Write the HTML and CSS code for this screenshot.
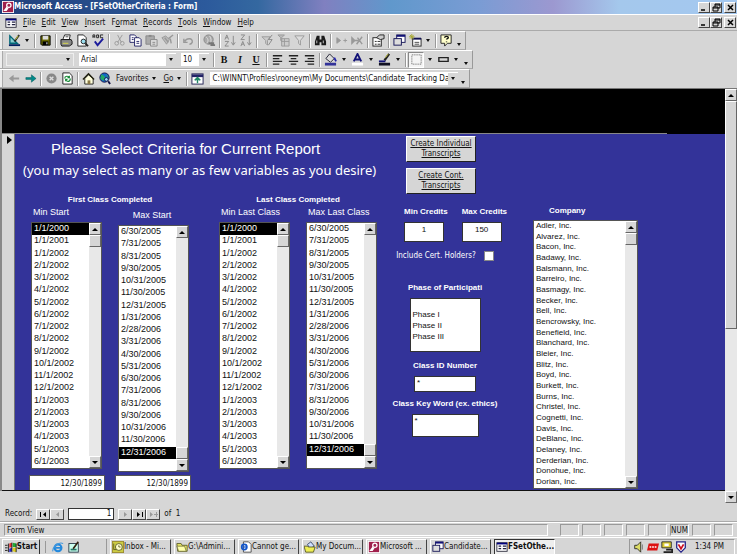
FILE: index.html
```
<!DOCTYPE html>
<html lang="en">
<head>
  <meta charset="UTF-8">
  <meta name="viewport" content="width=device-width, initial-scale=1.0">
  <title>Microsoft Access - [FSetOtherCriteria : Form]</title>
  <link rel="stylesheet" href="styles.css">
</head>
<body>
  <!-- Icons -->
  <svg class="sprite" aria-hidden="true">
    <symbol id="i-key" viewBox="0 0 14 14"><rect width="14" height="14" fill="#fff"/><rect x="1" y="1" width="12" height="12" fill="#a0204c"/><circle cx="8" cy="5" r="2.5" fill="none" stroke="#fff" stroke-width="1.5"/><path d="M6 7l-3 4h2l2-3" fill="none" stroke="#fff" stroke-width="1.5"/></symbol>
    <symbol id="i-form" viewBox="0 0 14 14"><rect x="1" y="2" width="12" height="10" fill="#fff" stroke="#223"/><path d="M1 3h12" stroke="#000080" stroke-width="2"/><path d="M3 6h3M3 9h3M8 6h4M8 9h4" stroke="#224" stroke-width="1.5"/></symbol>
    <symbol id="i-design" viewBox="0 0 14 14"><path d="M2 2v8h8z" fill="#8cc" stroke="#067" stroke-width="1.5"/><path d="M1 12h12" stroke="#002060" stroke-width="2"/><path d="M12 1L7 8" stroke="#222" stroke-width="2"/><path d="M11 2L8 6" stroke="#dd4"/></symbol>
    <symbol id="i-save" viewBox="0 0 14 14"><path d="M2 2h10v10H3l-1-1z" fill="#660" stroke="#000"/><path d="M4 2h6v4H4z" fill="#ddd"/><path d="M4 8h6v4H4z" fill="#000"/><path d="M8 9h1v2H8z" fill="#fff"/></symbol>
    <symbol id="i-print" viewBox="0 0 14 14"><path d="M5 1h6l-1 5H3z" fill="#fff" stroke="#222"/><path d="M1 6h11l1 2v3l-3 2H2l-1-2z" fill="#888" stroke="#111"/><path d="M3 10h6" stroke="#dd4"/><path d="M6 3h3" stroke="#444"/></symbol>
    <symbol id="i-preview" viewBox="0 0 14 14"><path d="M2 1h6l3 3v9H2z" fill="#fff" stroke="#222"/><circle cx="8" cy="8" r="2.5" fill="#9de" stroke="#222"/><path d="M10 10l3 3" stroke="#222" stroke-width="2"/></symbol>
    <symbol id="i-spell" viewBox="0 0 14 14"><path d="M1 4V1h2v3M1 3h2M5 1v3h2V1zM12 1H9v3h3" fill="none" stroke="#222"/><path d="M3 8l3 4 6-7" fill="none" stroke="#1c1c9c" stroke-width="2"/></symbol>
    <symbol id="i-cut" viewBox="0 0 14 14"><path d="M5 1l4 8M10 1L5 9" stroke="#999" fill="none"/><circle cx="4" cy="10" r="2" fill="none" stroke="#999"/><circle cx="10" cy="10" r="2" fill="none" stroke="#999"/></symbol>
    <symbol id="i-copy" viewBox="0 0 14 14"><path d="M1 1h5l2 2v6H1z" fill="#fff" stroke="#226"/><path d="M6 4h5l2 2v7H6z" fill="#fff" stroke="#226"/><path d="M3 4h2M3 6h2M8 8h3M8 10h3" stroke="#226"/></symbol>
    <symbol id="i-paste" viewBox="0 0 14 14"><path d="M1 2h9v9H1z" fill="#aaa" stroke="#888"/><path d="M4 1h3v2H4z" fill="#888"/><path d="M6 6h7v7H6z" fill="#ddd" stroke="#888"/><path d="M8 9h3M8 11h3" stroke="#888"/></symbol>
    <symbol id="i-painter" viewBox="0 0 14 14"><path d="M1 4l4-2 4 4-3 5z" fill="#bbb" stroke="#999"/><path d="M8 5l5-4M4 4l4 5M10 5l1 5" stroke="#999" stroke-width="1.5"/></symbol>
    <symbol id="i-undo" viewBox="0 0 14 14"><path d="M2 5v4h4M3 8c2-4 9-4 8 1-1 2-2 2-3 2" fill="none" stroke="#999" stroke-width="1.5"/></symbol>
    <symbol id="i-globe" viewBox="0 0 14 14"><circle cx="6" cy="6" r="5" fill="#aaa" stroke="#888"/><path d="M3 3c3 2 3 5 1 7M7 2c2 3 2 5 1 8" stroke="#ddd" fill="none"/><path d="M6 10h6M8 12h5" stroke="#777" stroke-width="2"/></symbol>
    <symbol id="i-sort" viewBox="0 0 14 14"><path d="M1 6l2-5 2 5M2 4h2M1 8h4l-4 5h4" stroke="#888" fill="none"/><path d="M10 2v9M8 9l2 3 2-3" stroke="#888" fill="none"/></symbol>
    <symbol id="i-sortdesc" viewBox="0 0 14 14"><path d="M1 13l2-5 2 5M2 11h2M1 1h4L1 6h4" stroke="#888" fill="none"/><path d="M10 2v9M8 9l2 3 2-3" stroke="#888" fill="none"/></symbol>
    <symbol id="i-filtersel" viewBox="0 0 14 14"><path d="M1 3h9L7 7v5L5 10V7z" fill="#ccc" stroke="#999"/><path d="M12 1L8 6h4l-4 6" fill="none" stroke="#888"/></symbol>
    <symbol id="i-filterform" viewBox="0 0 14 14"><path d="M5 5h8v8H5zM5 8h8M8 5v8" fill="#ccc" stroke="#999"/><path d="M1 1h7L5 4v4L4 7V4z" fill="#bbb" stroke="#999"/></symbol>
    <symbol id="i-filter" viewBox="0 0 14 14"><path d="M2 2h10L8 7v5L6 10V7z" fill="#ddd" stroke="#999"/></symbol>
    <symbol id="i-find" viewBox="0 0 14 14"><path d="M3 2h3v4h2V2h3l2 6v4H8V9H6v3H1V8z" fill="#1a1a1a"/><path d="M3 7v3M10 7v3" stroke="#ccc"/></symbol>
    <symbol id="i-newrec" viewBox="0 0 14 14"><path d="M2 4l4 3-4 3zM9 7h4M11 5v4" fill="#999" stroke="#999"/></symbol>
    <symbol id="i-delrec" viewBox="0 0 14 14"><path d="M1 4l3 3-3 3zM4 7h4M6 11l6-8M7 4l5 7" fill="#999" stroke="#999" stroke-width="1.5"/></symbol>
    <symbol id="i-props" viewBox="0 0 14 14"><rect x="1" y="4" width="9" height="9" fill="#fff" stroke="#222"/><path d="M3 8h2M3 11h2M6 8h3M6 11h3" stroke="#222"/><path d="M5 4l3-3h5v4l-4 1z" fill="#ccc" stroke="#222"/></symbol>
    <symbol id="i-windows" viewBox="0 0 14 14"><rect x="4" y="1" width="9" height="8" fill="#fff" stroke="#115"/><path d="M4 2h9" stroke="#117" stroke-width="2"/><rect x="1" y="5" width="8" height="7" fill="#ddd" stroke="#115"/></symbol>
    <symbol id="i-newobj" viewBox="0 0 14 14"><rect x="4" y="5" width="9" height="8" fill="#fff" stroke="#222"/><path d="M4 5h9" stroke="#115" stroke-width="2"/><path d="M6 9h5M6 11h5" stroke="#444"/><path d="M3 0v6M0 3h6M1 1l4 4M5 1L1 5" stroke="#aa3"/></symbol>
    <symbol id="i-help" viewBox="0 0 14 14"><path d="M1 1h11v9H8l-3 3v-3H1z" fill="#ffc" stroke="#222"/><path d="M5 4c0-2 4-2 4 0 0 1-2 1-2 2M7 8v1" fill="none" stroke="#111" stroke-width="1.5"/></symbol>
    <symbol id="i-left" viewBox="0 0 14 14"><path d="M2 3h10M2 6h7M2 9h10M2 12h7" stroke="#222" stroke-width="1.5"/></symbol>
    <symbol id="i-center" viewBox="0 0 14 14"><path d="M2 3h10M4 6h6M2 9h10M4 12h6" stroke="#222" stroke-width="1.5"/></symbol>
    <symbol id="i-right" viewBox="0 0 14 14"><path d="M2 3h10M5 6h7M2 9h10M5 12h7" stroke="#222" stroke-width="1.5"/></symbol>
    <symbol id="i-fill" viewBox="0 0 14 14"><path d="M6 1l5 5-4 4-5-4z" fill="#ddd" stroke="#223"/><path d="M11 5l2 4" stroke="#22a" stroke-width="2"/><path d="M1 12h12" stroke="#339" stroke-width="3"/></symbol>
    <symbol id="i-fontcolor" viewBox="0 0 14 14"><path d="M3 9l4-8 4 8M4 7h6" fill="none" stroke="#117" stroke-width="2"/><path d="M1 12h12" stroke="#fff" stroke-width="3"/></symbol>
    <symbol id="i-linecolor" viewBox="0 0 14 14"><path d="M12 1L7 8" stroke="#222" stroke-width="2.5"/><path d="M11 1L8 5" stroke="#cc4"/><path d="M1 9h7" stroke="#117" stroke-width="2"/><path d="M1 12h12" stroke="#112" stroke-width="3"/></symbol>
    <symbol id="i-border" viewBox="0 0 14 14"><path d="M2 2h10v10H2z" fill="none" stroke="#555" stroke-dasharray="1 1"/></symbol>
    <symbol id="i-effect" viewBox="0 0 14 14"><path d="M2 5h10v4H2z" fill="none" stroke="#222" stroke-width="1.5"/></symbol>
    <symbol id="i-back" viewBox="0 0 14 14"><path d="M1 7l5-4v3h6v2H6v3z" fill="#999"/></symbol>
    <symbol id="i-forward" viewBox="0 0 14 14"><path d="M13 7L8 3v3H2v2h6v3z" fill="#088" stroke="#055" stroke-width=".5"/></symbol>
    <symbol id="i-stop" viewBox="0 0 14 14"><circle cx="7" cy="7" r="5.5" fill="#888"/><path d="M5 5l4 4M9 5l-4 4" stroke="#ddd" stroke-width="1.5"/></symbol>
    <symbol id="i-refresh" viewBox="0 0 14 14"><path d="M2 1h7l3 3v9H2z" fill="#fff" stroke="#222"/><path d="M4 7c0-3 4-3 5-1M10 7c0 4-4 4-5 1M9 4v2H7M5 10V8h2" fill="none" stroke="#183" stroke-width="1.2"/></symbol>
    <symbol id="i-home" viewBox="0 0 14 14"><path d="M3 7v6h9V7L7 3z" fill="#ffd" stroke="#222"/><path d="M1 8l6-6 6 6" fill="none" stroke="#221" stroke-width="1.5"/><path d="M6 9h3v4H6z" fill="#874"/></symbol>
    <symbol id="i-web" viewBox="0 0 14 14"><circle cx="7" cy="6" r="5" fill="#16c" stroke="#114"/><path d="M4 3l3 2-1 4-3-2zM9 3l2 3" fill="#2a6" stroke="#2a6"/><circle cx="9" cy="8" r="2" fill="#9df" stroke="#114"/><path d="M11 10l2 3" stroke="#114" stroke-width="2"/></symbol>
    <symbol id="i-hidebars" viewBox="0 0 14 14"><rect x="1" y="2" width="12" height="11" fill="#fff" stroke="#225"/><path d="M1 4h12" stroke="#226" stroke-width="3"/><path d="M7 12V8M4 9l3-3 3 3" fill="#286" stroke="#286" stroke-width="1.5"/></symbol>
    <symbol id="i-flag" viewBox="0 0 14 14"><path d="M5 3l3-1v5l-3 1z" fill="#e33"/><path d="M9 2l4 1v4L9 7z" fill="#2a3"/><path d="M5 9l3-1v4l-3 1z" fill="#22c"/><path d="M9 8h4v5l-4-1z" fill="#dc2"/><path d="M4 3v10M8 2v11M13 3v10M0 5h3M0 8h3M0 11h3" stroke="#111"/></symbol>
    <symbol id="i-ie" viewBox="0 0 14 14"><circle cx="7" cy="8" r="4" fill="none" stroke="#28d" stroke-width="2.5"/><path d="M4 8h7" stroke="#28d" stroke-width="2"/><path d="M1 12C0 8 8 0 13 3" fill="none" stroke="#49d" stroke-width="1.2"/></symbol>
    <symbol id="i-iepage" viewBox="0 0 14 14"><path d="M4 1h6l3 3v9H4z" fill="#fff" stroke="#444"/><circle cx="5" cy="7" r="3" fill="none" stroke="#15c" stroke-width="2"/><path d="M3 7h5" stroke="#15c" stroke-width="1.5"/></symbol>
    <symbol id="i-desktop" viewBox="0 0 14 14"><rect x="1" y="3" width="11" height="10" fill="#cfe" stroke="#234"/><path d="M3 10h7" stroke="#276" stroke-width="2"/><path d="M12 1L6 9" stroke="#321" stroke-width="2"/></symbol>
    <symbol id="i-mail" viewBox="0 0 14 14"><rect width="14" height="14" fill="#983"/><rect x="1" y="1" width="12" height="12" fill="#cc4"/><circle cx="8" cy="7" r="4" fill="#ffc" stroke="#552"/><path d="M8 5v2h2" fill="none" stroke="#552"/><path d="M2 3v7h3" fill="none" stroke="#552"/></symbol>
    <symbol id="i-folder" viewBox="0 0 14 14"><path d="M1 3h5l1 2h6v7H2z" fill="#ee6" stroke="#552"/><path d="M1 6h9l2 6H3z" fill="#ffa" stroke="#774"/></symbol>
    <symbol id="i-docs" viewBox="0 0 14 14"><path d="M4 4l4-3 4 5-5 3z" fill="#cdf" stroke="#346"/><path d="M0 6h4l1 1h8l-2 6H2z" fill="#ee5" stroke="#552"/></symbol>
    <symbol id="i-speaker" viewBox="0 0 14 14"><path d="M2 5h3l4-4v12L5 9H2z" fill="#dd6" stroke="#222"/><path d="M11 4v6" stroke="#777"/></symbol>
    <symbol id="i-red" viewBox="0 0 14 14"><path d="M2 3h12l-2 8H0z" fill="#d11"/><path d="M3 7h8" stroke="#fff" stroke-width="1.5" stroke-dasharray="2 1"/></symbol>
    <symbol id="i-monitor" viewBox="0 0 14 14"><path d="M1 1h11v7H1z" fill="#dc3" stroke="#222"/><path d="M4 3h5v3H4z" fill="#fff"/><path d="M6 10h7v3H3" fill="none" stroke="#222" stroke-width="2"/></symbol>
    <symbol id="i-shield" viewBox="0 0 14 14"><path d="M2 1h10v7l-5 5-5-5z" fill="#fff" stroke="#228" stroke-width="1.5"/><path d="M4 4l3 5 3-5" fill="none" stroke="#c12" stroke-width="2"/></symbol>
    <symbol id="w-min" viewBox="0 0 9 9"><path d="M1 7h4" stroke="#000" stroke-width="1.5"/></symbol>
    <symbol id="w-restore" viewBox="0 0 9 9"><path d="M3 4V1h5v4H6M3 2h5M1 4h5v4H1zM1 5h5" fill="none" stroke="#000"/></symbol>
    <symbol id="w-close" viewBox="0 0 9 9"><path d="M2 2l5 5M7 2L2 7" stroke="#000" stroke-width="1.5"/></symbol>
    <symbol id="r-prev" viewBox="0 0 9 9"><path d="M6 2v5L3 4.500z"/></symbol>
    <symbol id="r-first" viewBox="0 0 9 9"><path d="M1 2h1v5H1zM7 2v5L4 4.500z"/></symbol>
    <symbol id="r-next" viewBox="0 0 9 9"><path d="M3 2v5l3-2.500z"/></symbol>
    <symbol id="r-last" viewBox="0 0 9 9"><path d="M7 2h1v5H7zM2 2v5l3-2.500z"/></symbol>
    <symbol id="r-new" viewBox="0 0 9 9"><path d="M1 2v5l3-2.500zM5 4h4v1H5zM7 2h1v5H7z"/></symbol>
  </svg>

  <header class="titlebar">
    <svg class="icon"><use href="#i-key"/></svg>
    <h1>Microsoft Access - [FSetOtherCriteria : Form]</h1>
    <div class="window-buttons">
      <button aria-label="Minimize"><svg><use href="#w-min"/></svg></button>
      <button aria-label="Restore"><svg><use href="#w-restore"/></svg></button>
      <button class="close" aria-label="Close"><svg><use href="#w-close"/></svg></button>
    </div>
  </header>

  <nav class="menubar">
    <svg class="icon"><use href="#i-form"/></svg>
    <button><u>F</u>ile</button>
    <button><u>E</u>dit</button>
    <button><u>V</u>iew</button>
    <button><u>I</u>nsert</button>
    <button>F<u>o</u>rmat</button>
    <button><u>R</u>ecords</button>
    <button><u>T</u>ools</button>
    <button><u>W</u>indow</button>
    <button><u>H</u>elp</button>
    <div class="window-buttons">
      <button aria-label="Minimize form"><svg><use href="#w-min"/></svg></button>
      <button aria-label="Restore form"><svg><use href="#w-restore"/></svg></button>
      <button class="close" aria-label="Close form"><svg><use href="#w-close"/></svg></button>
    </div>
  </nav>

  <div class="toolbars">
    <div class="toolbar">
      <button aria-label="View"><svg><use href="#i-design"/></svg></button>
      <button class="drop" aria-label="View list"></button>
      <i class="sep"></i>
      <button aria-label="Save"><svg><use href="#i-save"/></svg></button>
      <i class="sep"></i>
      <button aria-label="Print"><svg><use href="#i-print"/></svg></button>
      <button aria-label="Print Preview"><svg><use href="#i-preview"/></svg></button>
      <button aria-label="Spelling"><svg><use href="#i-spell"/></svg></button>
      <i class="sep"></i>
      <button aria-label="Cut"><svg><use href="#i-cut"/></svg></button>
      <button aria-label="Copy"><svg><use href="#i-copy"/></svg></button>
      <button aria-label="Paste"><svg><use href="#i-paste"/></svg></button>
      <button aria-label="Format Painter"><svg><use href="#i-painter"/></svg></button>
      <i class="sep"></i>
      <button aria-label="Undo"><svg><use href="#i-undo"/></svg></button>
      <i class="sep"></i>
      <button aria-label="Insert Hyperlink"><svg><use href="#i-globe"/></svg></button>
      <i class="sep"></i>
      <button aria-label="Sort Ascending"><svg><use href="#i-sort"/></svg></button>
      <button aria-label="Sort Descending"><svg><use href="#i-sortdesc"/></svg></button>
      <i class="sep"></i>
      <button aria-label="Filter By Selection"><svg><use href="#i-filtersel"/></svg></button>
      <button aria-label="Filter By Form"><svg><use href="#i-filterform"/></svg></button>
      <button aria-label="Apply Filter"><svg><use href="#i-filter"/></svg></button>
      <i class="sep"></i>
      <button aria-label="Find"><svg><use href="#i-find"/></svg></button>
      <i class="sep"></i>
      <button aria-label="New Record"><svg><use href="#i-newrec"/></svg></button>
      <button aria-label="Delete Record"><svg><use href="#i-delrec"/></svg></button>
      <i class="sep"></i>
      <button aria-label="Properties"><svg><use href="#i-props"/></svg></button>
      <i class="sep"></i>
      <button aria-label="Database Window"><svg><use href="#i-windows"/></svg></button>
      <button aria-label="New Object"><svg><use href="#i-newobj"/></svg></button>
      <button class="drop" aria-label="New Object list"></button>
      <i class="sep"></i>
      <button aria-label="Help"><svg><use href="#i-help"/></svg></button>
      <button class="drop low" aria-label="More buttons"></button>
    </div>

    <div class="toolbar">
      <div class="combo combo-object"><input type="text" aria-label="Object" disabled><button class="drop" aria-label="Object list"></button></div>
      <div class="combo combo-font"><input type="text" aria-label="Font" value="Arial"><button class="drop" aria-label="Font list"></button></div>
      <div class="combo combo-size"><input type="text" aria-label="Font Size" value="10"><button class="drop" aria-label="Size list"></button></div>
      <i class="sep"></i>
      <button class="glyph">B</button>
      <button class="glyph italic">I</button>
      <button class="glyph underline">U</button>
      <i class="sep"></i>
      <button aria-label="Align Left"><svg><use href="#i-left"/></svg></button>
      <button aria-label="Center"><svg><use href="#i-center"/></svg></button>
      <button aria-label="Align Right"><svg><use href="#i-right"/></svg></button>
      <i class="sep"></i>
      <button aria-label="Fill Color"><svg><use href="#i-fill"/></svg></button>
      <button class="drop wide" aria-label="Fill Color list"></button>
      <button aria-label="Font Color"><svg><use href="#i-fontcolor"/></svg></button>
      <button class="drop wide" aria-label="Font Color list"></button>
      <button aria-label="Line Color"><svg><use href="#i-linecolor"/></svg></button>
      <button class="drop wide" aria-label="Line Color list"></button>
      <i class="sep"></i>
      <button class="pressed" aria-label="Line Width"><svg><use href="#i-border"/></svg></button>
      <button class="drop wide" aria-label="Line Width list"></button>
      <button aria-label="Special Effect"><svg><use href="#i-effect"/></svg></button>
      <button class="drop" aria-label="Special Effect list"></button>
      <button class="drop low" aria-label="More buttons"></button>
    </div>

    <div class="toolbar">
      <button aria-label="Back"><svg><use href="#i-back"/></svg></button>
      <button aria-label="Forward"><svg><use href="#i-forward"/></svg></button>
      <i class="sep"></i>
      <button aria-label="Stop"><svg><use href="#i-stop"/></svg></button>
      <button aria-label="Refresh"><svg><use href="#i-refresh"/></svg></button>
      <i class="sep"></i>
      <button aria-label="Start Page"><svg><use href="#i-home"/></svg></button>
      <button aria-label="Search the Web"><svg><use href="#i-web"/></svg></button>
      <button class="text">Favorites</button>
      <button class="drop wide" aria-label="Favorites list"></button>
      <button class="text"><u>G</u>o</button>
      <button class="drop wide" aria-label="Go list"></button>
      <i class="sep"></i>
      <button aria-label="Show Only Web Toolbar"><svg><use href="#i-hidebars"/></svg></button>
      <div class="combo combo-address"><input type="text" aria-label="Address" value="C:\WINNT\Profiles\rooneym\My Documents\Candidate Tracking Da"><button class="drop" aria-label="Address list"></button></div>
      <button class="drop low" aria-label="More buttons"></button>
    </div>
  </div>

  <div class="workspace">
    <main class="form">
      <div class="form-header"></div>
      <div class="form-detail">
        <button class="record-selector" aria-label="Select record"></button>
        <div class="criteria">
          <section class="dates">
            <div class="heading">
              <h2>Please Select Criteria for Current Report</h2>
              <p>(you may select as many or as few variables as you desire)</p>
            </div>
            <div class="date-groups">
              <div class="date-group">
                <h3>First Class Completed</h3>
                <div class="columns">
                  <div class="column">
                    <label for="min-start">Min Start</label>
                    <div class="listbox">
                      <select id="min-start" size="20"></select>
                      <div class="scroll"><button class="up" aria-label="Up"></button><span class="thumb"></span><button class="down" aria-label="Down"></button></div>
                    </div>
                  </div>
                  <div class="column column-max">
                    <label for="max-start">Max Start</label>
                    <div class="listbox">
                      <select id="max-start" size="20"></select>
                      <div class="scroll at-end"><button class="up" aria-label="Up"></button><span class="thumb"></span><button class="down" aria-label="Down"></button></div>
                    </div>
                  </div>
                </div>
                <div class="chosen">
                  <input type="text" aria-label="Chosen min start" value="12/30/1899">
                  <input type="text" aria-label="Chosen max start" value="12/30/1899">
                </div>
              </div>
              <div class="date-group">
                <h3>Last Class Completed</h3>
                <div class="columns">
                  <div class="column">
                    <label for="min-last">Min Last Class</label>
                    <div class="listbox">
                      <select id="min-last" size="20"></select>
                      <div class="scroll"><button class="up" aria-label="Up"></button><span class="thumb"></span><button class="down" aria-label="Down"></button></div>
                    </div>
                  </div>
                  <div class="column">
                    <label for="max-last">Max Last Class</label>
                    <div class="listbox">
                      <select id="max-last" size="20"></select>
                      <div class="scroll at-end"><button class="up" aria-label="Up"></button><span class="thumb"></span><button class="down" aria-label="Down"></button></div>
                    </div>
                  </div>
                </div>
              </div>
            </div>
          </section>

          <section class="options">
            <div class="commands">
              <button>Create Individual<br>Transcripts</button>
              <button>Create Cont.<br>Transcripts</button>
            </div>
            <div class="credits">
              <div class="field">
                <label for="min-credits">Min Credits</label>
                <input id="min-credits" type="text" value="1">
              </div>
              <div class="field">
                <label for="max-credits">Max Credits</label>
                <input id="max-credits" type="text" value="150">
              </div>
            </div>
            <div class="holders">
              <label for="holders">Include Cert. Holders?</label>
              <input id="holders" type="checkbox">
            </div>
            <div class="field phase">
              <label for="phase">Phase of Participati</label>
              <select id="phase" size="4">
                <option></option>
                <option>Phase I</option>
                <option>Phase II</option>
                <option>Phase III</option>
              </select>
            </div>
            <div class="field">
              <label for="class-id">Class ID Number</label>
              <input id="class-id" class="class-id" type="text" value="*">
            </div>
            <div class="field">
              <label for="key-word">Class Key Word (ex. ethics)</label>
              <textarea id="key-word" class="key-word">*</textarea>
            </div>
          </section>

          <section class="company">
            <label for="company">Company</label>
            <div class="listbox">
              <select id="company" size="25"></select>
              <div class="scroll"><button class="up" aria-label="Up"></button><span class="thumb"></span><button class="down" aria-label="Down"></button></div>
            </div>
          </section>
        </div>
      </div>
    </main>
    <div class="scroll form-scroll"><button class="up" aria-label="Scroll up"></button><span class="thumb"></span><button class="down" aria-label="Scroll down"></button></div>
  </div>

  <div class="recordbar">
    <label for="record">Record:</label>
    <div class="nav-buttons">
      <button aria-label="First"><svg><use href="#r-first"/></svg></button>
      <button aria-label="Previous" disabled><svg><use href="#r-prev"/></svg></button>
    </div>
    <input id="record" type="text" value="1">
    <div class="nav-buttons">
      <button aria-label="Next" disabled><svg><use href="#r-next"/></svg></button>
      <button aria-label="Last"><svg><use href="#r-last"/></svg></button>
      <button aria-label="New" disabled><svg><use href="#r-new"/></svg></button>
    </div>
    <span>of&nbsp; 1</span>
  </div>

  <div class="statusbar">
    <span class="message">Form View</span>
    <span></span>
    <span></span>
    <span></span>
    <span></span>
    <span></span>
    <span>NUM</span>
    <span></span>
    <span></span>
  </div>

  <footer class="taskbar">
    <button class="start"><svg class="icon"><use href="#i-flag"/></svg>Start</button>
    <div class="quick">
      <button aria-label="Internet Explorer"><svg class="icon"><use href="#i-ie"/></svg></button>
      <button aria-label="Show Desktop"><svg class="icon"><use href="#i-desktop"/></svg></button>
    </div>
    <div class="tasks">
      <button><svg class="icon"><use href="#i-mail"/></svg>Inbox - Mi...</button>
      <button><svg class="icon"><use href="#i-folder"/></svg>G:\Admini...</button>
      <button><svg class="icon"><use href="#i-iepage"/></svg>Cannot ge...</button>
      <button><svg class="icon"><use href="#i-docs"/></svg>My Docum...</button>
      <button><svg class="icon"><use href="#i-key"/></svg>Microsoft ...</button>
      <button><svg class="icon"><use href="#i-windows"/></svg>Candidate...</button>
      <button class="active"><svg class="icon"><use href="#i-form"/></svg>FSetOthe...</button>
    </div>
    <div class="tray">
      <svg class="icon"><use href="#i-speaker"/></svg>
      <svg class="icon"><use href="#i-red"/></svg>
      <svg class="icon"><use href="#i-monitor"/></svg>
      <svg class="icon"><use href="#i-shield"/></svg>
      <time>1:34 PM</time>
    </div>
  </footer>

  <script>
    const minDates = ["1/1/2000", "1/1/2001"];
    for (let m = 1; m <= 12; m++) minDates.push(`${m}/1/2002`);
    for (let m = 1; m <= 6; m++) minDates.push(`${m}/1/2003`);

    // Month ends from June 2005 to December 2006
    const maxDates = [];
    for (let m = 5; m < 24; m++) {
      const end = new Date(2005, m + 1, 0);
      maxDates.push(`${end.getMonth() + 1}/${end.getDate()}/${end.getFullYear()}`);
    }

    const companies = [
      "Adler", "Alvarez", "Bacon", "Badawy", "Balsmann", "Barreiro", "Basmagy",
      "Becker", "Bell", "Bencrowsky", "Benefield", "Blanchard", "Bleier", "Blitz",
      "Boyd", "Burkett", "Burns", "Christel", "Cognetti", "Davis", "DeBlanc",
      "Delaney", "Derderian", "Donohue", "Dorian"
    ].map(name => name + ", Inc.");

    function fillList(id, items, selected) {
      const list = document.getElementById(id);
      items.forEach(item => list.add(new Option(item)));
      list.selectedIndex = selected;
    }

    fillList("min-start", minDates, 0);
    fillList("max-start", maxDates, maxDates.length - 1);
    fillList("min-last", minDates, 0);
    fillList("max-last", maxDates, maxDates.length - 1);
    fillList("company", companies, -1);
  </script>
</body>
</html>
```
FILE: styles.css
```
* {
  box-sizing: border-box;
}

body {
  margin: 0;
  min-height: 100vh;
  display: flex;
  flex-direction: column;
  background: #d6d6d6;
  color: #111;
  font-family: "DejaVu Sans Condensed", "Noto Sans", sans-serif;
  font-size: 8px;
  line-height: 12px;
}

h1, h2, h3, p {
  margin: 0;
}

button, input, select, textarea {
  margin: 0;
  padding: 0;
  border: 0;
  border-radius: 0;
  background: none;
  color: inherit;
  font: inherit;
  outline: 0;
}

input, select, textarea {
  min-width: 0;
  appearance: none;
}

button {
  display: flex;
  align-items: center;
  justify-content: center;
}

.sprite {
  display: none;
}

.icon {
  width: 12px;
  height: 12px;
  flex: none;
}

/* Title and menu */
.titlebar {
  height: 14px;
  display: flex;
  align-items: center;
  padding: 0 1px 0 2px;
  background: linear-gradient(90deg, #22407c 0%, #2c5a9c 28%, #3468a0 35%, #8080c0 44%, #6098cc 53%, #7a9cd4 65%, #9c98d0 75%, #a4c8ec 84%, #a4c8f0 100%);
}

.titlebar h1 {
  color: #fff;
  font-size: 8px;
  font-weight: bold;
}

.window-buttons {
  display: flex;
  margin-left: auto;
}

.window-buttons button {
  width: 12px;
  height: 11px;
  background: #d6d6d6;
  border: 1px solid;
  border-color: #fff #444 #444 #fff;
}

.window-buttons .close {
  margin-left: 2px;
}

.window-buttons svg, .nav-buttons svg {
  width: 9px;
  height: 9px;
}

.menubar {
  height: 17px;
  display: flex;
  align-items: center;
  gap: 6px;
  padding: 0 1px 0 5px;
  border-top: 1px solid #fff;
  border-bottom: 1px solid #aaa;
}

/* Toolbars */
.toolbars {
  display: flex;
  flex-direction: column;
  align-items: flex-start;
  border-bottom: 1px solid #777;
}

.toolbar {
  height: 19px;
  display: flex;
  align-items: center;
  padding: 0 1px 0 6px;
  border-top: 1px solid #fff;
  border-right: 1px solid #999;
  border-bottom: 1px solid #aaa;
  box-shadow: inset 2px 0 #eee, inset 3px 0 #aaa;
}

.toolbar button {
  width: 16px;
  height: 16px;
}

.toolbar svg {
  width: 13px;
  height: 13px;
}

.toolbar .drop {
  width: 10px;
}

.toolbar .wide {
  width: 11px;
}

.drop::after {
  content: "";
  border: 2px solid transparent;
  border-top: 3px solid #111;
  border-bottom: 0;
}

.toolbar .low {
  align-items: flex-end;
  padding-bottom: 3px;
}

.toolbar .text {
  width: auto;
  padding-left: 4px;
}

.toolbar .glyph {
  font: bold 10px "Liberation Serif", serif;
}

.toolbar .italic {
  font-style: italic;
}

.toolbar .underline {
  text-decoration: underline;
}

.toolbar .pressed {
  background: #f4f4f4;
  border: 1px solid;
  border-color: #888 #fff #fff #888;
}

.sep {
  width: 2px;
  height: 14px;
  margin: 0 1px 0 2px;
  border-left: 1px solid #999;
  border-right: 1px solid #fff;
}

.combo {
  display: flex;
  align-items: center;
  height: 13px;
  margin-right: 5px;
  background: #fff;
}

.combo input {
  flex: 1;
  padding-left: 2px;
}

.combo button {
  height: 12px;
  background: #d6d6d6;
}

.combo-object {
  width: 68px;
  background: #d6d6d6;
  border: 1px solid #eee;
}

.combo-font {
  width: 97px;
}

.combo-size {
  width: 28px;
  margin-right: 2px;
}

.combo-address {
  width: 248px;
  margin: 0 0 0 5px;
}

/* Scroll bars */
.scroll {
  width: 12px;
  flex: none;
  display: flex;
  flex-direction: column;
  background: #e8e8e8;
}

.scroll button, .scroll .thumb {
  width: 12px;
  height: 12px;
  background: #d6d6d6;
  border: 1px solid;
  border-color: #fff #666 #666 #fff;
}

.scroll .down {
  margin-top: auto;
}

.scroll.at-end .thumb {
  margin-top: auto;
}

.scroll.at-end .down {
  margin-top: 0;
}

.up::after, .down::after {
  content: "";
  border: 3px solid transparent;
}

.up::after {
  border-top: 0;
  border-bottom-color: #000;
}

.down::after {
  border-bottom: 0;
  border-top-color: #000;
}

.form-scroll .thumb {
  height: 55%;
}

/* Form */
.workspace {
  flex: 1;
  display: flex;
}

.form {
  flex: 1;
  display: flex;
  flex-direction: column;
  border-left: 2px solid #888;
  margin-bottom: 12px;
}

.form-header {
  height: 45px;
  background: linear-gradient(#888, #888) left bottom / 92% 1px no-repeat #000;
}

.form-detail {
  flex: 1;
  display: flex;
  border-bottom: 1px solid #111;
}

.record-selector {
  width: 13px;
  background: #d6d6d6;
  align-items: flex-start;
  justify-content: flex-end;
  padding: 2px 2px 0 0;
  border-right: 1px solid #777;
}

.record-selector::after {
  content: "";
  border: 4px solid transparent;
  border-left: 5px solid #000;
  border-right: 0;
}

.criteria {
  flex: 1;
  display: flex;
  align-items: flex-start;
  background: #333399;
  color: #fff;
  font-family: "Liberation Sans", Arial, sans-serif;
}

.dates {
  width: 362px;
}

.heading {
  padding: 5px 0 0 8px;
  white-space: nowrap;
}

.heading h2 {
  padding-left: 28px;
  font-size: 15px;
  font-weight: normal;
  line-height: 20px;
}

.heading p {
  font-family: "Noto Sans", sans-serif;
  font-size: 13px;
  line-height: 22px;
}

.date-groups {
  display: flex;
  gap: 30px;
  margin-top: 13px;
  padding-left: 16px;
}

h3 {
  font-size: 8px;
  line-height: 12px;
  text-align: center;
}

.columns {
  display: flex;
  gap: 16px;
}

.column {
  width: 71px;
}

.column-max {
  padding-top: 3px;
  text-align: center;
}

.column label {
  display: block;
  width: 64px;
  margin-left: 2px;
  margin-bottom: 4px;
  white-space: nowrap;
  font-size: 9px;
  line-height: 12px;
}

.listbox {
  display: flex;
  height: 247px;
  background: #fff;
  border: 1px solid #555;
  color: #111;
  font-size: 9px;
}

.listbox select {
  flex: 1;
  overflow: hidden;
  text-align: left;
}

.listbox option {
  height: 5%;
  min-height: 0;
  padding: 0 0 0 2px;
  line-height: 12px;
}

.listbox option:checked {
  background: #000 linear-gradient(#000, #000);
  color: #fff;
}

.chosen {
  display: flex;
  gap: 10px;
  margin: 3px -2px 0;
}

.chosen input {
  width: 76px;
  height: 15px;
  padding-right: 2px;
  background: #fff;
  border: 1px solid #555;
  border-bottom: 0;
  color: #111;
  font-family: "DejaVu Sans Condensed", sans-serif;
  text-align: right;
}

.options {
  width: 124px;
  margin-left: 6px;
  padding-top: 2px;
}

.commands {
  display: flex;
  flex-direction: column;
  align-items: center;
  gap: 6px;
  margin-right: 8px;
}

.commands button {
  width: 70px;
  height: 26px;
  background: #d6d6d6;
  border: 1px solid;
  border-color: #fff #222 #222 #fff;
  color: #111;
  font-family: "DejaVu Sans Condensed", sans-serif;
  line-height: 10px;
  text-decoration: underline;
}

.field {
  display: flex;
  flex-direction: column;
  align-items: center;
  gap: 4px;
  margin-bottom: 6px;
}

.field label, .company label {
  font-weight: bold;
  white-space: nowrap;
}

.field input, .field select, .field textarea {
  background: #fff;
  border: 1px solid #333;
  color: #111;
}

.credits {
  display: flex;
  justify-content: flex-end;
  gap: 14px;
  margin-top: 12px;
}

.credits .field {
  align-items: flex-start;
}

.credits input {
  width: 40px;
  height: 20px;
  padding-bottom: 6px;
  text-align: center;
}

.holders {
  display: flex;
  align-items: center;
  justify-content: center;
  gap: 8px;
  margin-top: 2px;
  font-family: "DejaVu Sans Condensed", sans-serif;
}

.holders input {
  width: 10px;
  height: 10px;
  background: #fff;
  border: 1px solid #888;
}

.phase {
  margin-top: 20px;
  margin-bottom: 8px;
}

.phase select {
  width: 71px;
  height: 54px;
  overflow: hidden;
}

.phase option {
  min-height: 0;
  height: 11px;
  padding: 0 0 0 2px;
}

.field .class-id {
  width: 62px;
  height: 16px;
  padding: 0 0 3px 2px;
}

.field .key-word {
  width: 67px;
  height: 23px;
  padding-left: 2px;
  resize: none;
}

.company {
  width: 105px;
  margin-left: 26px;
  padding-top: 71px;
}

.company label {
  display: block;
  margin-bottom: 3px;
  margin-left: 16px;
}

.company .listbox {
  height: 269px;
  font-size: 8px;
}

.company option {
  height: 4%;
  line-height: 11px;
}

/* Record navigation and status */
.recordbar {
  display: flex;
  align-items: center;
  gap: 4px;
  height: 19px;
  padding: 4px 0 0 5px;
  border-bottom: 1px solid #aaa;
}

.nav-buttons {
  display: flex;
}

.nav-buttons button {
  width: 14px;
  height: 11px;
  border: 1px solid;
  border-color: #fff #444 #444 #fff;
}

.nav-buttons button:disabled {
  fill: #999;
}

.recordbar input {
  width: 46px;
  height: 12px;
  padding-right: 2px;
  background: #fff;
  border: 1px solid #333;
  text-align: right;
}

.statusbar {
  display: flex;
  gap: 3px;
  height: 15px;
  padding: 1px 4px;
  border-top: 1px solid #fff;
}

.statusbar span {
  width: 19px;
  border: 1px solid;
  border-color: #999 #fff #fff #999;
  line-height: 11px;
}

.statusbar .message {
  flex: 1;
  margin-right: 9px;
  padding-left: 2px;
}

/* Taskbar */
.taskbar {
  display: flex;
  align-items: center;
  height: 19px;
  padding: 0 2px;
  border-top: 1px solid #fff;
}

.taskbar button {
  white-space: nowrap;
}

.start {
  width: 38px;
  height: 16px;
  border: 1px solid;
  border-color: #fff #333 #333 #fff;
  font-weight: bold;
}

.quick {
  display: flex;
  gap: 4px;
  width: 61px;
  margin-left: 5px;
  padding-left: 6px;
  border-left: 1px solid #999;
}

.tasks {
  flex: 1;
  display: flex;
  gap: 3px;
  padding-left: 3px;
  border-left: 1px solid #999;
}

.tasks button {
  flex: 1;
  max-width: 61px;
  height: 16px;
  justify-content: flex-start;
  overflow: hidden;
  padding-left: 1px;
  border: 1px solid;
  border-color: #fff #444 #444 #fff;
}

.tasks .active {
  background: #eee;
  border-color: #333 #fff #fff #333;
  font-weight: bold;
}

.tray {
  display: flex;
  align-items: center;
  gap: 2px;
  width: 106px;
  height: 16px;
  padding: 0 10px 0 3px;
  border: 1px solid;
  border-color: #999 #fff #fff #999;
}

.tray time {
  margin-left: auto;
}
```
